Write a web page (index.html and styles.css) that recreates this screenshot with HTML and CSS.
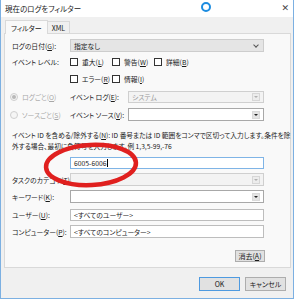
FILE: index.html
```html
<!DOCTYPE html>
<html lang="ja">
<head>
<meta charset="utf-8">
<link rel="stylesheet" href="styles.css">
</head>
<body>
<div class="win">
  <div class="titlebar">
    <span class="title">現在のログをフィルター</span>
    <span class="ring"></span>
    <span class="close">✕</span>
  </div>
  <div class="client">
    <div class="tabs">
      <div class="tab active">フィルター</div>
      <div class="tab">XML</div>
    </div>
    <div class="panel">
      <div class="row r-date">
        <div class="lbl">ログの日付(<u>G</u>):</div>
        <div class="ctl span2 combo gray"><span class="val">指定なし</span><span class="chev"></span></div>
      </div>
      <div class="row r-cb1">
        <div class="lbl">イベント レベル:</div>
        <div class="ctl span2 checks">
          <span class="cb"><i></i>重大(<u>L</u>)</span>
          <span class="cb"><i></i>警告(<u>W</u>)</span>
          <span class="cb"><i></i>詳細(<u>B</u>)</span>
        </div>
      </div>
      <div class="row r-cb2">
        <div class="lbl"></div>
        <div class="ctl span2 checks">
          <span class="cb"><i></i>エラー(<u>R</u>)</span>
          <span class="cb"><i></i>情報(<u>I</u>)</span>
        </div>
      </div>
      <div class="row r-log">
        <div class="radio dis"><i class="on"></i>ログごと(<u>O</u>)</div>
        <div class="lbl">イベント ログ(<u>E</u>):</div>
        <div class="ctl combo disabled"><span class="val">システム</span><span class="btn"><b></b></span></div>
      </div>
      <div class="row r-src">
        <div class="radio dis"><i></i>ソースごと(<u>S</u>)</div>
        <div class="lbl">イベント ソース(<u>V</u>):</div>
        <div class="ctl combo white"><span class="val"></span><span class="btn dark"><b></b></span></div>
      </div>
      <div class="desc">イベント ID を含める/除外する(<u>N</u>): ID 番号または ID 範囲をコンマで区切って入力します。条件を除<br>外する場合、最初に負符号を入力します。例 1,3,5-99,-76</div>
      <div class="row r-id">
        <div class="lbl"></div>
        <div class="ctl span2 input focus">6005-6006<span class="caret"></span></div>
      </div>
      <div class="row r-task">
        <div class="lbl">タスクのカテゴリ(<u>T</u>):</div>
        <div class="ctl span2 combo disabled"><span class="val"></span><span class="btn"><b></b></span></div>
      </div>
      <div class="row r-key">
        <div class="lbl">キーワード(<u>K</u>):</div>
        <div class="ctl span2 combo white"><span class="val"></span><span class="btn dark"><b></b></span></div>
      </div>
      <div class="row r-user">
        <div class="lbl">ユーザー(<u>U</u>):</div>
        <div class="ctl span2 input">&lt;すべてのユーザー&gt;</div>
      </div>
      <div class="row r-comp">
        <div class="lbl">コンピューター(<u>P</u>):</div>
        <div class="ctl span2 input">&lt;すべてのコンピューター&gt;</div>
      </div>
      <div class="clear-row">
        <div class="button">消去(<u>A</u>)</div>
      </div>
    </div>
    <div class="footer">
      <div class="button ok">OK</div>
      <div class="button cancel">キャンセル</div>
    </div>
  </div>
  <svg class="mark" width="100" height="54" viewBox="0 0 100 54">
    <ellipse cx="50" cy="27" rx="45" ry="20" transform="rotate(-3 50 27)" fill="none" stroke="#e0201f" stroke-width="4.5"/>
  </svg>
</div>
</body>
</html>
```
FILE: styles.css
```css
* { box-sizing: border-box; }
html, body { margin: 0; padding: 0; background: #ffffff; }
body {
  font-family: "Noto Sans CJK JP", "Noto Sans", sans-serif;
  font-feature-settings: "palt";
  font-size: 6.8px;
  color: #1a1a1a;
  width: 296px;
  height: 300px;
  overflow: hidden;
}
u { text-decoration: underline; text-underline-offset: 1px; }
.win {
  position: relative;
  width: 294px;
  height: 299px;
  border-left: 1px solid #7cb0e2;
  border-right: 1px solid #7cb0e2;
  border-bottom: 1px solid #7cb0e2;
  background: #f0f0f0;
  display: flex;
  flex-direction: column;
}
.titlebar {
  height: 17px;
  background: #ffffff;
  display: flex;
  align-items: center;
  padding: 0 0 0 4px;
  position: relative;
}
.title { font-size: 7.5px; color: #222; }
.ring {
  position: absolute;
  left: 200px;
  top: 2px;
  width: 10px;
  height: 10px;
  border: 2.5px solid #1c8ce0;
  border-radius: 50%;
}
.close {
  position: absolute;
  right: 4px;
  top: 3px;
  font-size: 9px;
  color: #444;
  font-family: "DejaVu Sans", sans-serif;
}
.client { flex: 1; padding: 3px 0 0 3px; display: flex; flex-direction: column; }
.tabs { display: flex; height: 13px; align-items: flex-end; position: relative; z-index: 1; }
.tab {
  height: 12px;
  padding: 0 4px;
  border: 1px solid #d9d9d9;
  border-bottom: none;
  background: #f0f0f0;
  display: flex;
  align-items: center;
  font-size: 7px;
  margin-left: -1px;
}
.tab.active {
  height: 14px;
  background: #f9f9f9;
  margin-left: 1px;
  margin-bottom: -1px;
  padding: 0 5px;
}
.panel {
  width: 287px;
  height: 235px;
  border: 1px solid #d9d9d9;
  background: #f9f9f9;
  padding: 5px 25px 0 7px;
  display: flex;
  flex-direction: column;
}
.row {
  display: grid;
  grid-template-columns: 58px 58px 136px;
  align-items: center;
  height: 13px;
}
.lbl { white-space: nowrap; }
.span2 { grid-column: 2 / 4; }
.r-cb1 { margin-top: 4px; height: 12px; }
.r-cb2 { margin-top: 4px; }
.r-log { margin-top: 6px; height: 12px; }
.r-src { margin-top: 5px; }
.r-id { margin-top: 5px; height: 12px; }
.r-task { margin-top: 4px; }
.r-key { margin-top: 4px; }
.r-user { margin-top: 6px; height: 12px; }
.r-comp { margin-top: 4px; }
.ctl { height: 100%; }
.combo {
  display: flex;
  align-items: center;
  border: 1px solid #c8c8c8;
  padding: 0 1px 0 3px;
}
.combo .val { flex: 1; }
.combo.gray { background: #e5e5e5; border-color: #cdcdcd; }
.combo.white { background: #ffffff; border-color: #a8a8a8; }
.combo.disabled { background: #f3f3f3; border-color: #cfcfcf; color: #9a9a9a; }
.chev {
  width: 4px; height: 4px;
  border-right: 1px solid #555;
  border-bottom: 1px solid #555;
  transform: rotate(45deg);
  margin: 0 4px 2px 0;
}
.btn {
  width: 8px; height: 8px;
  border: 1px solid #d6d6d6;
  background: #ececec;
  display: flex; align-items: center; justify-content: center;
  margin-right: 2px;
}
.btn.dark { background: #e4e4e4; border-color: #dadada; }
.btn b {
  width: 0; height: 0;
  border-left: 2px solid transparent;
  border-right: 2px solid transparent;
  border-top: 2px solid #b0b0b0;
}
.btn.dark b { border-top-color: #222; }
.checks { display: flex; align-items: center; }
.cb { display: flex; align-items: center; width: 42px; white-space: nowrap; }
.cb i {
  width: 8px; height: 8px;
  border: 1px solid #333;
  background: #fff;
  margin-right: 4px;
}
.radio { display: flex; align-items: center; white-space: nowrap; margin-left: -2px; }
.radio.dis { color: #a8a8a8; }
.radio i {
  width: 8px; height: 8px;
  border-radius: 50%;
  border: 1px solid #cfcfcf;
  background: #f5f5f5;
  margin-right: 4px;
  display: flex; align-items: center; justify-content: center;
}
.radio i.on::after {
  content: "";
  width: 4px; height: 4px; border-radius: 50%;
  background: #b8b8b8;
}
.desc {
  margin-top: 9px;
  margin-right: -30px;
  line-height: 11px;
  font-size: 6.7px;
  white-space: nowrap;
}
.input {
  display: flex;
  align-items: center;
  background: #fff;
  border: 1px solid #bdbdbd;
  padding: 0 3px;
}
.input.focus { border-color: #7fb4e6; }
.caret { width: 1px; height: 8px; background: #000; margin-left: 0; }
.clear-row { display: flex; justify-content: flex-end; margin-top: 12px; }
.button {
  height: 12px;
  border: 1px solid #adadad;
  background: #e1e1e1;
  display: flex; align-items: center; justify-content: center;
  font-size: 7px;
}
.clear-row .button { width: 30px; }
.footer { display: flex; justify-content: flex-end; padding: 9px 7px 0 0; gap: 5px; }
.footer .button { width: 41px; height: 14px; }
.footer .ok { border-color: #4e9ae0; }
.mark {
  position: absolute;
  left: 40px;
  top: 138px;
}
```
